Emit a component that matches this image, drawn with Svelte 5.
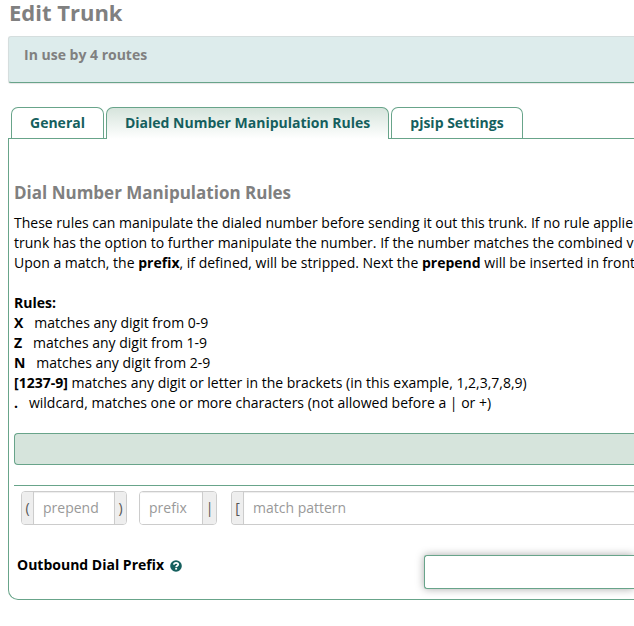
<script lang="ts">
	const tabs = ['General', 'Dialed Number Manipulation Rules', 'pjsip Settings'];
	let active = $state(1);

	const rules = [
		{ token: 'X', gap: '\u00a0\u00a0 ', text: 'matches any digit from 0-9' },
		{ token: 'Z', gap: '\u00a0\u00a0 ', text: 'matches any digit from 1-9' },
		{ token: 'N', gap: '\u00a0\u00a0 ', text: 'matches any digit from 2-9' },
		{
			token: '[1237-9]',
			gap: ' ',
			text: 'matches any digit or letter in the brackets (in this example, 1,2,3,7,8,9)'
		},
		{
			token: '.',
			gap: '\u00a0\u00a0 ',
			text: 'wildcard, matches one or more characters (not allowed before a | or +)'
		}
	];

	let prepend = $state('');
	let prefix = $state('');
	let pattern = $state('');
	let outbound = $state('');
</script>

<main class="page">
	<h1>Edit Trunk</h1>
	<div class="usage">In use by 4 routes</div>

	<div class="tabs" role="tablist">
		{#each tabs as tab, i}
			<button
				class="tab"
				class:active={active === i}
				role="tab"
				aria-selected={active === i}
				onclick={() => (active = i)}>{tab}</button
			>
		{/each}
	</div>

	<section class="panel">
		<h2>Dial Number Manipulation Rules</h2>
		<p class="help">
			These rules can manipulate the dialed number before sending it out this trunk. If no rule applie<br />
			trunk has the option to further manipulate the number. If the number matches the combined v<br />
			Upon a match, the <strong>prefix</strong>, if defined, will be stripped. Next the
			<strong>prepend</strong> will be inserted in front
		</p>
		<p class="help">
			<strong>Rules:</strong><br />
			{#each rules as rule}
				<strong>{rule.token}</strong>{rule.gap}{rule.text}<br />
			{/each}
		</p>

		<div class="toolbar"></div>

		<div class="patterns">
			<div class="group prepend">
				<span class="addon">(</span>
				<input type="text" placeholder="prepend" aria-label="prepend" bind:value={prepend} />
				<span class="addon">)</span>
			</div>
			<div class="group prefix">
				<input type="text" placeholder="prefix" aria-label="prefix" bind:value={prefix} />
				<span class="addon wide">|</span>
			</div>
			<div class="group match">
				<span class="addon">[</span>
				<input type="text" placeholder="match pattern" aria-label="match pattern" bind:value={pattern} />
			</div>
		</div>

		<div class="field">
			<label for="outbound"
				>Outbound Dial Prefix
				<svg class="hint" viewBox="0 0 12 12" aria-hidden="true">
					<circle cx="6" cy="6" r="5.8" fill="#155f5e" />
					<path
						d="M3.8 4.6C4 3.3 5 2.8 6.1 2.8c1.2 0 2.1.6 2.1 1.6 0 1.3-2 1.3-2 2.7"
						fill="none"
						stroke="#fff"
						stroke-width="1.8"
					/>
					<rect x="5.2" y="7.8" width="1.9" height="1.8" fill="#fff" />
				</svg>
			</label>
			<input id="outbound" type="text" bind:value={outbound} />
		</div>
	</section>
</main>

<style>
	:global(body) {
		margin: 0;
		background: #fff;
	}
	.page {
		padding-left: 8px;
		overflow-x: clip;
		font: 14px/20px 'Open Sans', sans-serif;
		color: #000;
	}
	h1,
	h2 {
		margin: 0;
		color: #808080;
		font-weight: 700;
	}
	h1 {
		padding-left: 1px;
		font-size: 22px;
		line-height: 24px;
	}
	.usage {
		margin-top: 12px;
		padding: 8px 15px 17px;
		border: 1px solid #d5dede;
		border-right: 0;
		border-bottom-color: #68a48a;
		border-radius: 3px 0 0 3px;
		background: #ddecec;
		box-shadow: 0 1px 1px rgba(0, 0, 0, 0.1);
		color: #808080;
		font-weight: 700;
	}
	.tabs {
		display: flex;
		gap: 2px;
		margin-top: 24px;
		padding-left: 3px;
	}
	.tab {
		position: relative;
		height: 31px;
		padding: 0 18px;
		border: 1px solid #68a48a;
		border-bottom: 0;
		border-radius: 7px 7px 0 0;
		background: #fff;
		color: #155f5e;
		font: inherit;
		font-weight: 700;
		white-space: nowrap;
		cursor: pointer;
	}
	.tab.active {
		height: 32px;
		margin-bottom: -1px;
		padding-bottom: 1px;
		background: linear-gradient(#d6e4dc, #fff);
	}
	.panel {
		padding: 44px 0 10px 5px;
		border: 1px solid #68a48a;
		border-right: 0;
		border-bottom-left-radius: 10px;
	}
	h2 {
		margin-bottom: 10px;
		font-size: 17px;
		line-height: 20px;
	}
	.help {
		margin: 0 0 20px;
		white-space: nowrap;
	}
	.toolbar {
		height: 30px;
		border: 1px solid #68a48a;
		border-right: 0;
		border-radius: 4px 0 0 4px;
		background: #d6e4dc;
	}
	.patterns {
		display: flex;
		margin-top: 20px;
		padding: 5px 0 0 7px;
		border-top: 1px solid #68a48a;
	}
	.group {
		display: flex;
		box-sizing: border-box;
		height: 34px;
		border: 1px solid #ccc;
		border-radius: 4px;
		overflow: hidden;
	}
	.prepend {
		width: 106px;
		margin-right: 12px;
	}
	.prefix {
		width: 78px;
		margin-right: 14px;
	}
	.match {
		flex: 1;
		border-right: 0;
		border-radius: 4px 0 0 4px;
	}
	.group input {
		flex: 1;
		min-width: 0;
		padding: 0 9px;
		border: 0;
		background: #fff;
		box-shadow: inset 0 1px 1px rgba(0, 0, 0, 0.075);
		color: #555;
		font: inherit;
	}
	.group input::placeholder {
		color: #999;
		opacity: 1;
	}
	.addon {
		width: 11px;
		background: #eee;
		color: #555;
		line-height: 32px;
		text-align: center;
	}
	.addon.wide {
		width: 13px;
	}
	.addon:first-child {
		border-right: 1px solid #ccc;
	}
	.addon:last-child {
		border-left: 1px solid #ccc;
	}
	.field {
		display: grid;
		grid-template-columns: 66% 1fr;
		margin-top: 30px;
		padding-left: 3px;
	}
	.field label {
		font-weight: 700;
	}
	.hint {
		width: 12px;
		height: 12px;
		margin-left: 2px;
		vertical-align: -2px;
	}
	.field input {
		box-sizing: border-box;
		width: 100%;
		height: 34px;
		padding: 6px 12px;
		border: 1px solid #68a48a;
		border-right: 0;
		border-radius: 3px 0 0 3px;
		background: #fff;
		box-shadow: 0 0 8px rgba(0, 0, 0, 0.35);
		font: inherit;
	}
</style>
